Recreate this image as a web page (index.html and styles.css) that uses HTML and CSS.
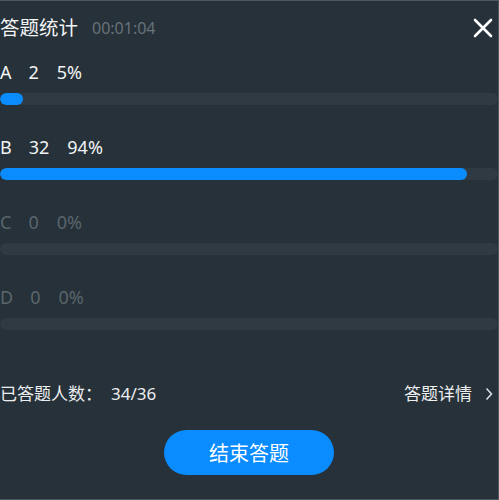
FILE: index.html
```html
<!DOCTYPE html>
<html lang="zh">
<head>
<meta charset="utf-8">
<title>答题统计</title>
<link rel="stylesheet" href="styles.css">
</head>
<body>
<div class="panel">
  <div class="header">
    <span class="title">答题统计</span>
    <span class="timer">00:01:04</span>
    <svg class="close" width="20" height="20" viewBox="0 0 20 20" aria-label="关闭">
      <path d="M2 2 L18 18 M18 2 L2 18" stroke="#ffffff" stroke-width="2.6" stroke-linecap="round" fill="none"/>
    </svg>
  </div>
  <div class="stats">
    <div class="row">
      <div class="label"><span class="opt">A</span><span class="cnt">2</span><span>5%</span></div>
      <div class="bar"><div class="fill" style="width:23px"></div></div>
    </div>
    <div class="row">
      <div class="label"><span class="opt">B</span><span class="cnt">32</span><span>94%</span></div>
      <div class="bar"><div class="fill" style="width:467px"></div></div>
    </div>
    <div class="row dim">
      <div class="label"><span class="opt">C</span><span class="cnt">0</span><span>0%</span></div>
      <div class="bar"></div>
    </div>
    <div class="row dim">
      <div class="label"><span class="opt">D</span><span class="cnt">0</span><span>0%</span></div>
      <div class="bar"></div>
    </div>
  </div>
  <div class="footer">
    <span class="answered">已答题人数：<span class="num">34/36</span></span>
    <span class="detail">答题详情
      <svg class="chev" width="8" height="14" viewBox="0 0 8 14"><path d="M1.5 1.5 L6.5 7 L1.5 12.5" stroke="#d9dcdf" stroke-width="1.6" fill="none"/></svg>
    </span>
  </div>
  <button class="end">结束答题</button>
</div>
</body>
</html>
```
FILE: styles.css
```css
html, body {
  margin: 0;
  padding: 0;
  background: #263139;
}
body {
  font-family: "Noto Sans", "Noto Sans CJK SC", sans-serif;
  color: #eef0f2;
}
.panel {
  box-sizing: border-box;
  width: 499px;
  height: 500px;
  background: #263139;
  border-top: 1px solid #4d575f;
  border-right: 1px solid #4d575f;
  border-bottom: 1px solid #4d575f;
  padding-top: 15px;
  display: flex;
  flex-direction: column;
}
.header {
  display: flex;
  align-items: center;
  height: 24px;
}
.title {
  font-size: 19.5px;
  line-height: 24px;
  color: #f2f4f5;
}
.timer {
  font-size: 16px;
  line-height: 24px;
  color: #68727a;
  margin-left: 14px;
}
.close {
  margin-left: auto;
  margin-right: 5px;
  display: block;
}
.stats {
  margin-top: 20px;
  display: flex;
  flex-direction: column;
  gap: 30px;
}
.label {
  display: flex;
  font-size: 18px;
  line-height: 24px;
  height: 24px;
  color: #f2f4f5;
}
.label .opt {
  margin-right: 17px;
}
.label .cnt {
  margin-right: 18px;
}
.dim .label {
  color: #5a656c;
}
.bar {
  margin-top: 9px;
  height: 12px;
  border-radius: 6px;
  background: #2f3a42;
  overflow: hidden;
}
.fill {
  height: 12px;
  border-radius: 6px;
  background: #0a8cff;
}
.footer {
  margin-top: 52px;
  display: flex;
  justify-content: space-between;
  align-items: center;
  font-size: 17px;
  line-height: 24px;
  color: #eceef0;
}
.answered .num {
  margin-left: 9px;
}
.detail {
  display: flex;
  align-items: center;
  gap: 13px;
  padding-right: 5px;
}
.chev {
  display: block;
}
.end {
  margin: 24px auto 0;
  width: 170px;
  height: 45px;
  border: none;
  border-radius: 23px;
  background: #0a8cff;
  color: #ffffff;
  font-family: "Noto Sans CJK SC", sans-serif;
  font-size: 20px;
  padding: 0;
}
```
